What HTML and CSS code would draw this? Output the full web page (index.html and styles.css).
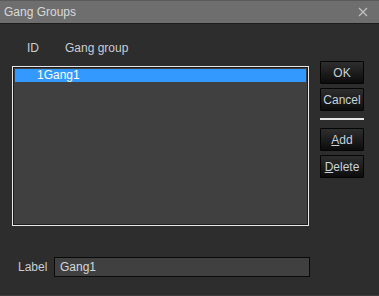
FILE: index.html
```html
<!DOCTYPE html>
<html lang="en">
<head>
    <meta charset="UTF-8">
    <title>Gang Groups</title>
    <link rel="stylesheet" href="styles.css">
</head>
<body>
    <div class="dialog">
        <div class="titlebar">
            <span class="title">Gang Groups</span>
            <svg class="close" width="10" height="10" viewBox="0 0 10 10">
                <path d="M1 1 L9 9 M9 1 L1 9" stroke="#bdbdbd" stroke-width="1.4" fill="none"/>
            </svg>
        </div>
        <div class="content">
            <div class="main-row">
                <div class="list-col">
                    <div class="list-head">
                        <span class="col-id">ID</span>
                        <span class="col-name">Gang group</span>
                    </div>
                    <div class="list-box">
                        <div class="list-inner">
                            <div class="row selected">
                                <span class="cell-id">1</span><span class="cell-name">Gang1</span>
                            </div>
                        </div>
                    </div>
                </div>
                <div class="btn-col">
                    <button class="btn">OK</button>
                    <button class="btn">Cancel</button>
                    <div class="separator"></div>
                    <button class="btn"><u>A</u>dd</button>
                    <button class="btn"><u>D</u>elete</button>
                </div>
            </div>
            <div class="label-row">
                <span class="label">Label</span>
                <div class="text-field">Gang1</div>
            </div>
        </div>
    </div>
</body>
</html>
```
FILE: styles.css
```css
body {
    margin: 0;
    padding: 0;
    background: #2d2d2d;
    font-family: "Liberation Sans", Arial, sans-serif;
    font-size: 12px;
}
.dialog {
    width: 379px;
    height: 296px;
    background: #2d2d2d;
    box-sizing: border-box;
    border-bottom: 1px solid #3c3c3c;
    display: flex;
    flex-direction: column;
}
.titlebar {
    height: 22px;
    background: #6e6e6e;
    border-top: 1px solid #5a5a5a;
    border-bottom: 1px solid #1c1c1c;
    display: flex;
    align-items: center;
    justify-content: space-between;
    padding: 0 11px 0 4px;
}
.title {
    color: #dadada;
    font-size: 12px;
}
.content {
    flex: 1;
    padding: 0 0 0 12px;
    display: flex;
    flex-direction: column;
}
.main-row {
    display: flex;
}
.list-col {
    width: 297px;
}
.list-head {
    height: 18px;
    margin-top: 15px;
    color: #c8ced4;
    display: flex;
    align-items: center;
}
.col-id {
    margin-left: 15px;
    width: 38px;
}
.list-box {
    margin-top: 9px;
    height: 160px;
    box-sizing: border-box;
    border: 1px solid #e8e8e8;
    background: #1c1c1c;
    padding: 1px;
}
.list-inner {
    height: 100%;
    background: #404040;
    padding-top: 1px;
    box-sizing: border-box;
}
.row {
    height: 13px;
    line-height: 13px;
    color: #ffffff;
    margin: 0 1px;
}
.row.selected {
    background: #3399ff;
}
.cell-id {
    margin-left: 22px;
}
.btn-col {
    margin-left: 11px;
    padding-top: 37px;
    width: 44px;
    display: flex;
    flex-direction: column;
}
.btn {
    height: 23px;
    margin-bottom: 4px;
    padding: 0;
    font-family: "Liberation Sans", Arial, sans-serif;
    font-size: 12px;
    color: #c8d2dc;
    background: linear-gradient(#2e2e2e, #0c0c0c);
    border: 1px solid #050505;
    border-radius: 1px;
}
.separator {
    height: 2px;
    background: #e6e6e6;
    margin: 3px 0 8px;
}
.label-row {
    margin-top: 31px;
    display: flex;
    align-items: center;
}
.label {
    color: #c8ced4;
    margin-left: 6px;
    width: 36px;
}
.text-field {
    width: 256px;
    height: 20px;
    box-sizing: border-box;
    border: 1px solid #0a0a0a;
    background: #404040;
    color: #d4d8dc;
    line-height: 18px;
    padding-left: 5px;
}
```
